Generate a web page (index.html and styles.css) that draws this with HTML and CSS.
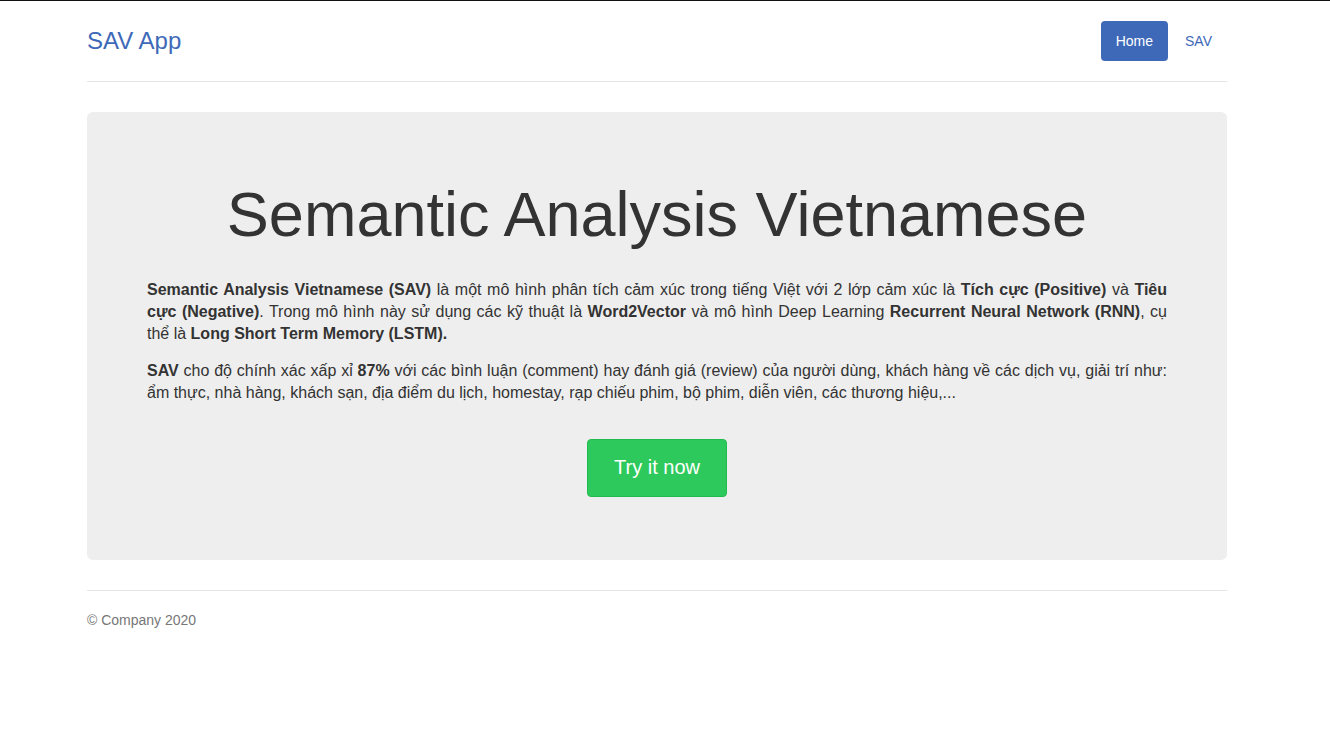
FILE: index.html
```html
<!DOCTYPE html>
<html lang="vi">
<head>
<meta charset="utf-8">
<title>SAV App</title>
<link rel="stylesheet" href="styles.css">
</head>
<body>
<div class="page">
  <div class="container">
    <header class="header">
      <h3 class="brand">SAV App</h3>
      <nav class="nav">
        <a class="pill active" href="#">Home</a>
        <a class="pill" href="#">SAV</a>
      </nav>
    </header>

    <section class="jumbotron">
      <h1 class="title">Semantic Analysis Vietnamese</h1>
      <p class="lead"><b>Semantic Analysis Vietnamese (SAV)</b> là một mô hình phân tích cảm xúc trong tiếng Việt với 2 lớp cảm xúc là <b>Tích cực (Positive)</b> và <b>Tiêu cực (Negative)</b>. Trong mô hình này sử dụng các kỹ thuật là <b>Word2Vector</b> và mô hình Deep Learning <b>Recurrent Neural Network (RNN)</b>, cụ thể là <b>Long Short Term Memory (LSTM).</b></p>
      <p class="lead"><b>SAV</b> cho độ chính xác xấp xỉ <b>87%</b> với các bình luận (comment) hay đánh giá (review) của người dùng, khách hàng về các dịch vụ, giải trí như: ẩm thực, nhà hàng, khách sạn, địa điểm du lịch, homestay, rạp chiếu phim, bộ phim, diễn viên, các thương hiệu,...</p>
      <div class="cta"><a class="btn-try" href="#">Try it now</a></div>
    </section>

    <footer class="footer">© Company 2020</footer>
  </div>
</div>
</body>
</html>
```

FILE: styles.css
```css
html, body {
  margin: 0;
  padding: 0;
}
body {
  font-family: "Liberation Sans", Arial, Helvetica, sans-serif;
  font-size: 14px;
  line-height: 20px;
  color: #333;
  background: #fff;
  border-top: 1px solid #111;
}
.page {
  padding-right: 16px;
}
.container {
  width: 1140px;
  margin: 0 auto;
  padding-top: 20px;
}
.header {
  display: flex;
  align-items: center;
  justify-content: space-between;
  padding-bottom: 20px;
  border-bottom: 1px solid #e5e5e5;
  margin-bottom: 30px;
}
.brand {
  margin: 0;
  font-size: 24px;
  font-weight: normal;
  line-height: 40px;
  color: #3e69b9;
}
.nav {
  display: flex;
  gap: 2px;
}
.pill {
  display: block;
  padding: 10px 15px;
  line-height: 20px;
  border-radius: 4px;
  color: #3e69b9;
  text-decoration: none;
}
.pill.active {
  background: #3e69b9;
  color: #fff;
}
.jumbotron {
  background: #eee;
  border-radius: 6px;
  padding: 48px 60px 48px;
}
.title {
  margin: 20px 0 30px;
  font-size: 63px;
  font-weight: normal;
  line-height: 1.1;
  text-align: center;
  color: #333;
}
.lead {
  margin: 0 0 15px;
  font-size: 16px;
  line-height: 22px;
  text-align: justify;
}
.lead b {
  font-weight: bold;
}
.cta {
  display: flex;
  justify-content: center;
  margin-top: 35px;
  margin-bottom: 15px;
}
.btn-try {
  display: block;
  padding: 14px 26px;
  font-size: 20px;
  line-height: 27px;
  height: 27px;
  color: #fff;
  background: #2ec95c;
  border: 1px solid #22bb4f;
  border-radius: 4px;
  text-decoration: none;
  box-sizing: content-box;
  padding-bottom: 15px;
}
.footer {
  margin-top: 30px;
  padding-top: 19px;
  border-top: 1px solid #e5e5e5;
  color: #777;
  font-size: 14px;
  line-height: 20px;
}
```
